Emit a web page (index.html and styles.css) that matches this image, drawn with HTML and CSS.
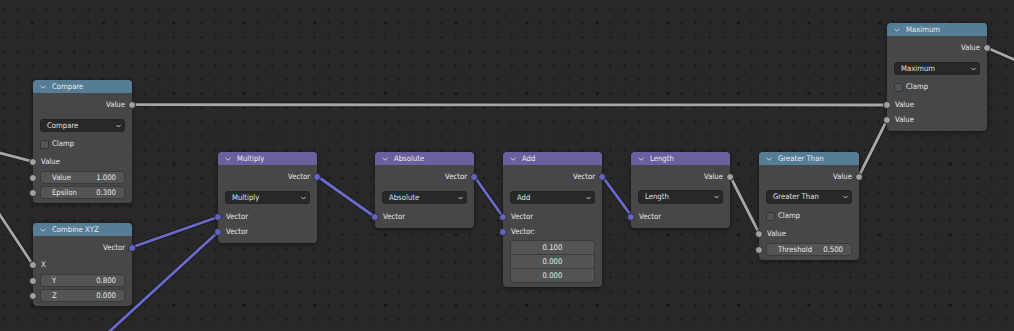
FILE: index.html
```html
<!DOCTYPE html>
<html>
<head>
<meta charset="utf-8">
<link rel="stylesheet" href="styles.css">
</head>
<body>
<div class="canvas">
  <svg class="links" width="1014" height="331" viewBox="0 0 1014 331">
    <g class="outline">
      <path d="M-10 150.4 L33 161.7"/>
      <path d="M-20 184.7 L33 265"/>
      <path d="M132 104.7 L887 105"/>
      <path d="M730 176 L759 233"/>
      <path d="M859 176 L887 120"/>
      <path d="M987 47.7 L1024 64"/>
      <path d="M132 247.3 L218 217"/>
      <path d="M105.6 335 L218 232"/>
      <path d="M317 176 L375 217"/>
      <path d="M474 176 L503 217"/>
      <path d="M602 176 L631 215.3"/>
    </g>
    <g class="grey">
      <path d="M-10 150.4 L33 161.7"/>
      <path d="M-20 184.7 L33 265"/>
      <path d="M132 104.7 L887 105"/>
      <path d="M730 176 L759 233"/>
      <path d="M859 176 L887 120"/>
      <path d="M987 47.7 L1024 64"/>
    </g>
    <g class="vec">
      <path d="M132 247.3 L218 217"/>
      <path d="M105.6 335 L218 232"/>
      <path d="M317 176 L375 217"/>
      <path d="M474 176 L503 217"/>
      <path d="M602 176 L631 215.3"/>
    </g>
  </svg>

  <!-- Compare -->
  <div class="node n-compare">
    <div class="hdr conv"><svg class="chev" width="6" height="4" viewBox="0 0 6 4"><polyline points="0.5,0.8 3,3.2 5.5,0.8"/></svg><span>Compare</span></div>
    <div class="body">
      <div class="row out">Value<i class="sock"></i></div>
      <div class="dd"><span>Compare</span><svg class="ddchev" width="5" height="4" viewBox="0 0 5 4"><polyline points="0.5,1 2.5,3 4.5,1"/></svg></div>
      <div class="chk"><span class="box"></span><span>Clamp</span></div>
      <div class="row in"><i class="sock"></i>Value</div>
      <div class="row frow"><i class="sock"></i><div class="field"><span>Value</span><span>1.000</span></div></div>
      <div class="row frow"><i class="sock"></i><div class="field"><span>Epsilon</span><span>0.300</span></div></div>
    </div>
  </div>

  <!-- Combine XYZ -->
  <div class="node n-combine">
    <div class="hdr conv"><svg class="chev" width="6" height="4" viewBox="0 0 6 4"><polyline points="0.5,0.8 3,3.2 5.5,0.8"/></svg><span>Combine XYZ</span></div>
    <div class="body">
      <div class="row out">Vector<i class="sock v"></i></div>
      <div class="row in first"><i class="sock"></i>X</div>
      <div class="row frow"><i class="sock"></i><div class="field"><span>Y</span><span>0.800</span></div></div>
      <div class="row frow"><i class="sock"></i><div class="field"><span>Z</span><span>0.000</span></div></div>
    </div>
  </div>

  <!-- Multiply -->
  <div class="node n-multiply">
    <div class="hdr vech"><svg class="chev" width="6" height="4" viewBox="0 0 6 4"><polyline points="0.5,0.8 3,3.2 5.5,0.8"/></svg><span>Multiply</span></div>
    <div class="body">
      <div class="row out">Vector<i class="sock v"></i></div>
      <div class="dd"><span>Multiply</span><svg class="ddchev" width="5" height="4" viewBox="0 0 5 4"><polyline points="0.5,1 2.5,3 4.5,1"/></svg></div>
      <div class="row in after-dd"><i class="sock v"></i>Vector</div>
      <div class="row in"><i class="sock v"></i>Vector</div>
    </div>
  </div>

  <!-- Absolute -->
  <div class="node n-absolute">
    <div class="hdr vech"><svg class="chev" width="6" height="4" viewBox="0 0 6 4"><polyline points="0.5,0.8 3,3.2 5.5,0.8"/></svg><span>Absolute</span></div>
    <div class="body">
      <div class="row out">Vector<i class="sock v"></i></div>
      <div class="dd"><span>Absolute</span><svg class="ddchev" width="5" height="4" viewBox="0 0 5 4"><polyline points="0.5,1 2.5,3 4.5,1"/></svg></div>
      <div class="row in after-dd"><i class="sock v"></i>Vector</div>
    </div>
  </div>

  <!-- Add -->
  <div class="node n-add">
    <div class="hdr vech"><svg class="chev" width="6" height="4" viewBox="0 0 6 4"><polyline points="0.5,0.8 3,3.2 5.5,0.8"/></svg><span>Add</span></div>
    <div class="body">
      <div class="row out">Vector<i class="sock v"></i></div>
      <div class="dd"><span>Add</span><svg class="ddchev" width="5" height="4" viewBox="0 0 5 4"><polyline points="0.5,1 2.5,3 4.5,1"/></svg></div>
      <div class="row in after-dd"><i class="sock v"></i>Vector</div>
      <div class="row in"><i class="sock v"></i>Vector:</div>
      <div class="vbox">
        <div class="vcell">0.100</div>
        <div class="vcell">0.000</div>
        <div class="vcell">0.000</div>
      </div>
    </div>
  </div>

  <!-- Length -->
  <div class="node n-length">
    <div class="hdr vech"><svg class="chev" width="6" height="4" viewBox="0 0 6 4"><polyline points="0.5,0.8 3,3.2 5.5,0.8"/></svg><span>Length</span></div>
    <div class="body">
      <div class="row out">Value<i class="sock"></i></div>
      <div class="dd up"><span>Length</span><svg class="ddchev" width="5" height="4" viewBox="0 0 5 4"><polyline points="0.5,1 2.5,3 4.5,1"/></svg></div>
      <div class="row in after-dd"><i class="sock v"></i>Vector</div>
    </div>
  </div>

  <!-- Greater Than -->
  <div class="node n-greater">
    <div class="hdr conv"><svg class="chev" width="6" height="4" viewBox="0 0 6 4"><polyline points="0.5,0.8 3,3.2 5.5,0.8"/></svg><span>Greater Than</span></div>
    <div class="body">
      <div class="row out">Value<i class="sock"></i></div>
      <div class="dd up"><span>Greater Than</span><svg class="ddchev" width="5" height="4" viewBox="0 0 5 4"><polyline points="0.5,1 2.5,3 4.5,1"/></svg></div>
      <div class="chk"><span class="box"></span><span>Clamp</span></div>
      <div class="row in"><i class="sock"></i>Value</div>
      <div class="row frow"><i class="sock"></i><div class="field"><span>Threshold</span><span>0.500</span></div></div>
    </div>
  </div>

  <!-- Maximum -->
  <div class="node n-maximum">
    <div class="hdr conv"><svg class="chev" width="6" height="4" viewBox="0 0 6 4"><polyline points="0.5,0.8 3,3.2 5.5,0.8"/></svg><span>Maximum</span></div>
    <div class="body">
      <div class="row out">Value<i class="sock"></i></div>
      <div class="dd"><span>Maximum</span><svg class="ddchev" width="5" height="4" viewBox="0 0 5 4"><polyline points="0.5,1 2.5,3 4.5,1"/></svg></div>
      <div class="chk"><span class="box"></span><span>Clamp</span></div>
      <div class="row in"><i class="sock"></i>Value</div>
      <div class="row in"><i class="sock"></i>Value</div>
    </div>
  </div>
</div>
</body>
</html>
```

FILE: styles.css
```css
* { box-sizing: border-box; }

body {
  margin: 0;
  background: #282828;
  font-family: "Liberation Sans", Arial, sans-serif;
}

.canvas {
  position: relative;
  width: 1014px;
  height: 331px;
  overflow: hidden;
  background-color: #282828;
  background-image:
    radial-gradient(circle, #171717 1.4px, transparent 1.9px),
    radial-gradient(circle, #1b1b1b 1px, transparent 1.5px);
  background-size: 70.6px 70.6px, 14.12px 14.12px;
  background-position: -2.6px -12.3px, -3.06px 1.94px;
}

.links {
  position: absolute;
  left: 0;
  top: 0;
}

.links path { fill: none; stroke-linecap: round; }
.links .outline path { stroke: #1c1c1c; stroke-width: 4.8; }
.links .grey path { stroke: #a6a6a6; stroke-width: 2.8; }
.links .vec path { stroke: #6a6acb; stroke-width: 2.8; }

.node {
  position: absolute;
  width: 99px;
  background: #474747;
  border-radius: 4px;
  box-shadow: 0 1px 4px rgba(0, 0, 0, 0.55);
  color: #e8e8e8;
  font-family: "DejaVu Sans Condensed", "DejaVu Sans", sans-serif;
  font-stretch: condensed;
  font-size: 7.7px;
  line-height: 1;
}

.n-compare  { left: 33px;  top: 80px; }
.n-combine  { left: 33px;  top: 223px; }
.n-multiply { left: 218px; top: 152px; }
.n-absolute { left: 375px; top: 152px; }
.n-add      { left: 503px; top: 152px; }
.n-length   { left: 631px; top: 152px; }
.n-greater  { left: 759px; top: 152px; width: 100px; }
.n-maximum  { left: 887px; top: 23px;  width: 100px; }

.hdr {
  height: 13px;
  border-radius: 4px 4px 0 0;
  display: flex;
  align-items: center;
  padding-left: 7px;
  gap: 6px;
  color: #eeeeee;
}

.hdr.conv { background: #557d95; }
.hdr.vech { background: #6b5fa0; }

.chev polyline,
.ddchev polyline {
  fill: none;
  stroke: #dedede;
  stroke-width: 0.9;
}

.body {
  padding: 4px 0 4px;
  display: flex;
  flex-direction: column;
}

.row {
  position: relative;
  height: 15px;
  display: flex;
  align-items: center;
}

.out {
  justify-content: flex-end;
  padding-right: 7px;
}

.in { padding-left: 8px; }

.in.first { margin-top: 2px; }
.in.after-dd { margin-top: 5px; }
.chk + .in { margin-top: 3px; }

.sock {
  position: absolute;
  top: 50%;
  width: 8px;
  height: 8px;
  margin-top: -4px;
  border-radius: 50%;
  background: #a1a1a1;
  border: 1px solid #2c2c2c;
}

.out .sock { right: -4px; }
.in .sock, .frow .sock { left: -4px; }
.sock.v { background: #6363c7; }

.dd {
  margin: 7px 7px 0;
  height: 13px;
  background: #282828;
  border: 1px solid #232323;
  border-radius: 3px;
  display: flex;
  align-items: center;
  justify-content: space-between;
  padding: 0 3px 0 6px;
  color: #e0e0e0;
}

.dd.up { margin-top: 6px; height: 14px; }

.chk {
  margin-top: 5px;
  height: 14px;
  display: flex;
  align-items: center;
  padding-left: 7px;
  gap: 3px;
}

.box {
  width: 9px;
  height: 9px;
  background: #545454;
  border: 1px solid #333333;
  border-radius: 2px;
}

.frow {
  height: 13px;
  margin-top: 2px;
  padding: 0 7px;
}

.field {
  flex: 1;
  height: 13px;
  background: #545454;
  border: 1px solid #3a3a3a;
  border-radius: 3px;
  display: flex;
  align-items: center;
  justify-content: space-between;
  padding: 0 8px 0 11px;
  color: #e8e8e8;
}

.vbox {
  margin: 1px 7px 0;
  border: 1px solid #3a3a3a;
  border-radius: 3px;
  background: #545454;
  overflow: hidden;
}

.vcell {
  height: 13px;
  display: flex;
  align-items: center;
  justify-content: center;
  color: #e8e8e8;
}

.vcell + .vcell { border-top: 1px solid #3a3a3a; height: 14px; }
```
